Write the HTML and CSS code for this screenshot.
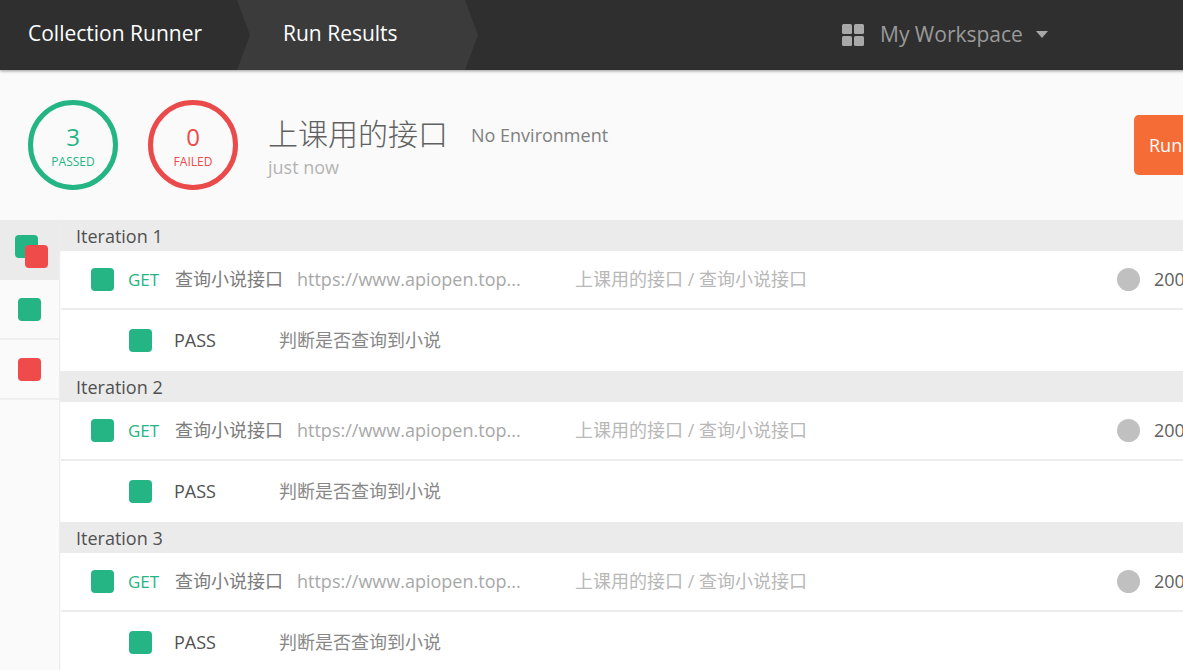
FILE: index.html
```html
<!DOCTYPE html>
<html lang="zh">
<head>
<meta charset="utf-8">
<title>Collection Runner</title>
<link rel="stylesheet" href="styles.css">
</head>
<body>
<div class="page">
  <header class="topbar">
    <div class="crumb crumb-first">Collection Runner</div>
    <div class="crumb crumb-active">Run Results</div>
    <div class="workspace">
      <svg class="ws-icon" width="22" height="22" viewBox="0 0 22 22"><rect x="0" y="0" width="10" height="10" rx="1.5"/><rect x="12" y="0" width="10" height="10" rx="1.5"/><rect x="0" y="12" width="10" height="10" rx="1.5"/><rect x="12" y="12" width="10" height="10" rx="1.5"/></svg>
      <span class="ws-name">My Workspace</span>
      <span class="caret"></span>
    </div>
  </header>
  <section class="summary">
    <div class="ring ring-pass"><span class="ring-num">3</span><span class="ring-label">PASSED</span></div>
    <div class="ring ring-fail"><span class="ring-num">0</span><span class="ring-label">FAILED</span></div>
    <div class="run-info">
      <div class="run-title"><span class="run-name">上课用的接口</span><span class="run-env">No Environment</span></div>
      <div class="run-time">just now</div>
    </div>
    <button class="run-btn">Run Again</button>
  </section>
  <div class="results">
    <aside class="side">
      <div class="side-item side-current"><span class="sq sq-green sq-back"></span><span class="sq sq-red sq-front"></span></div>
      <div class="side-item"><span class="sq sq-green"></span></div>
      <div class="side-item"><span class="sq sq-red"></span></div>
    </aside>
    <main class="list">
      <section class="iteration">
        <h2 class="iter-head">Iteration 1</h2>
        <div class="req"><span class="sq sq-green"></span><span class="method">GET</span><span class="name">查询小说接口</span><span class="url">https://www.apiopen.top...</span><span class="path">上课用的接口 / 查询小说接口</span><span class="dot"></span><span class="code">200 OK</span></div>
        <div class="test"><span class="sq sq-green"></span><span class="pass">PASS</span><span class="tname">判断是否查询到小说</span></div>
      </section>
      <section class="iteration">
        <h2 class="iter-head">Iteration 2</h2>
        <div class="req"><span class="sq sq-green"></span><span class="method">GET</span><span class="name">查询小说接口</span><span class="url">https://www.apiopen.top...</span><span class="path">上课用的接口 / 查询小说接口</span><span class="dot"></span><span class="code">200 OK</span></div>
        <div class="test"><span class="sq sq-green"></span><span class="pass">PASS</span><span class="tname">判断是否查询到小说</span></div>
      </section>
      <section class="iteration">
        <h2 class="iter-head">Iteration 3</h2>
        <div class="req"><span class="sq sq-green"></span><span class="method">GET</span><span class="name">查询小说接口</span><span class="url">https://www.apiopen.top...</span><span class="path">上课用的接口 / 查询小说接口</span><span class="dot"></span><span class="code">200 OK</span></div>
        <div class="test"><span class="sq sq-green"></span><span class="pass">PASS</span><span class="tname">判断是否查询到小说</span></div>
      </section>
    </main>
  </div>
</div>
</body>
</html>
```
FILE: styles.css
```css
* { box-sizing: border-box; }
html, body { margin: 0; height: 100%; overflow: hidden; background: #fafafa; }
body { font-family: "Open Sans", "Noto Sans CJK SC", sans-serif; color: #505050; }
.page { width: 1320px; }

.topbar { height: 70px; display: flex; align-items: stretch; background: #2f2f2f; box-shadow: 0 1px 3px rgba(0,0,0,.4); position: relative; }
.crumb { display: flex; align-items: center; padding-bottom: 4px; color: #fff; font-size: 21px; }
.crumb-first { width: 237px; padding-left: 28px; }
.crumb-active { width: 241px; padding-left: 46px; background: #3b3b3b; clip-path: polygon(0 0, calc(100% - 13px) 0, 100% 50%, calc(100% - 13px) 100%, 0 100%, 13px 50%); }
.workspace { display: flex; align-items: center; margin-left: 364px; color: #9a9a9a; font-size: 21px; }
.ws-icon { fill: #a8a8a8; }
.ws-name { margin-left: 16px; margin-bottom: 3px; }
.caret { margin-left: 13px; margin-bottom: 2px; border-left: 6px solid transparent; border-right: 6px solid transparent; border-top: 7px solid #a8a8a8; }

.summary { height: 150px; display: flex; align-items: center; padding: 0 0 0 28px; background: #fafafa; }
.ring { width: 90px; height: 90px; margin-top: -1px; border: 5px solid; border-radius: 50%; display: flex; flex-direction: column; align-items: center; justify-content: center; padding-top: 5px; }
.ring-pass { border-color: #25b585; color: #25b585; }
.ring-fail { border-color: #ea4a4a; color: #ea4a4a; margin-left: 30px; }
.ring-num { font-size: 24px; line-height: 28px; }
.ring-label { font-size: 12px; line-height: 20px; margin-top: 1px; }
.run-info { margin-left: 30px; margin-top: 2px; }
.run-title { display: flex; align-items: center; }
.run-name { font-size: 30px; line-height: 40px; font-weight: 300; color: #606060; margin-bottom: 2px; }
.run-env { margin-left: 23px; font-size: 18px; color: #808080; }
.run-time { font-size: 18px; line-height: 24px; color: #b4b4b4; margin-top: -1px; }
.run-btn { margin-left: auto; width: 186px; height: 60px; padding: 0 0 0 15px; border: 0; border-radius: 5px; background: #f56c36; color: #fff; font: inherit; font-size: 18px; font-weight: 400; text-align: left; }

.results { display: flex; }
.side { width: 60px; flex: none; height: 450px; border-right: 1px solid #ededed; background: #fafafa; }
.side-item { height: 60px; border-bottom: 2px solid #efefef; display: flex; align-items: center; justify-content: center; position: relative; }
.side-current { background: #ebebeb; border-bottom: 0; }
.sq { display: block; width: 23px; height: 23px; border-radius: 4px; flex: none; }
.sq-green { background: #25b585; }
.sq-red { background: #f04b4b; }
.sq-back { position: absolute; left: 15px; top: 15px; }
.sq-front { position: absolute; left: 25px; top: 25px; }

.list { flex: 1; }
.iteration { display: block; }
.iter-head { margin: 0; height: 31px; padding-left: 16px; background: #ebebeb; font-size: 18px; line-height: 33px; font-weight: 400; color: #505050; }
.req { height: 59px; margin-left: 1px; display: flex; align-items: center; padding-left: 30px; background: #fff; border-bottom: 2px solid #ececec; font-size: 18px; }
.method { margin-left: 14px; width: 47px; color: #25b585; font-size: 17px; }
.name { width: 122px; color: #7c7c7c; margin-bottom: 3px; }
.url { width: 278px; color: #a8a8a8; margin-bottom: 2px; }
.path { width: 542px; color: #b8b8b8; margin-bottom: 3px; }
.dot { width: 23px; height: 23px; border-radius: 50%; background: #c0c0c0; flex: none; }
.code { margin-left: 14px; color: #606060; white-space: nowrap; margin-bottom: 2px; }
.test { height: 61px; margin-left: 1px; display: flex; align-items: center; padding-left: 68px; background: #fff; font-size: 18px; }
.test .sq { margin-bottom: 1px; }
.pass { margin-left: 22px; width: 106px; color: #505050; margin-bottom: 2px; }
.tname { color: #888; margin-bottom: 3px; margin-left: -1px; }
```
